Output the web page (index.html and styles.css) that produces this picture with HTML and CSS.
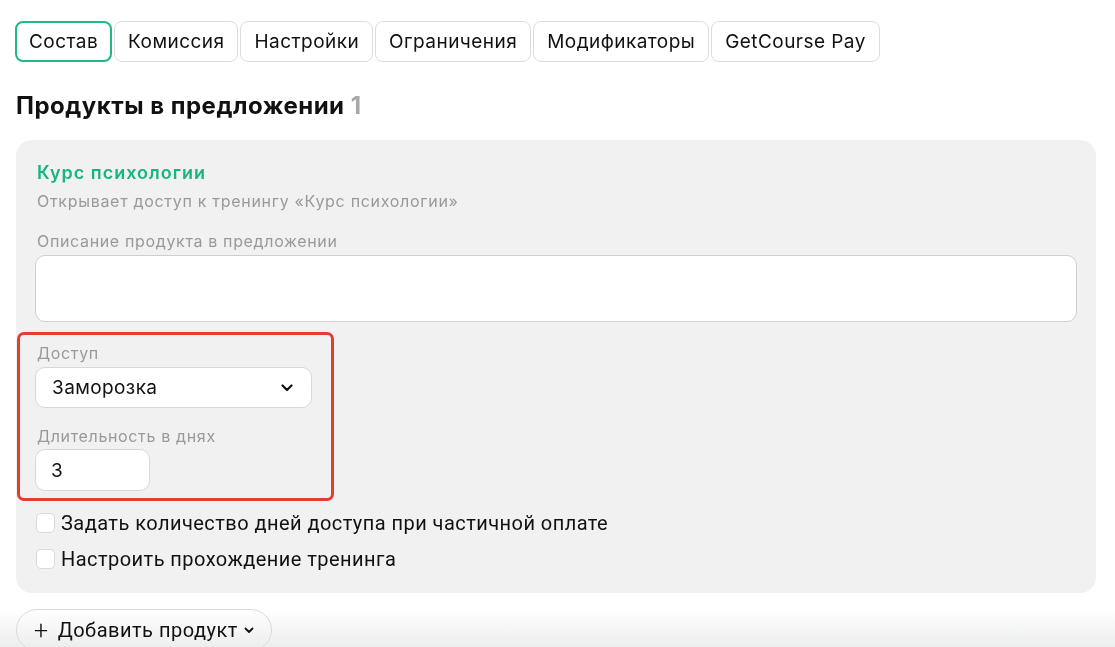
FILE: index.html
```html
<!DOCTYPE html>
<html lang="ru">
<head>
  <meta charset="UTF-8" />
  <meta name="viewport" content="width=device-width, initial-scale=1.0" />
  <title>Предложение — состав</title>
  <link rel="stylesheet" href="styles.css">
</head>
<body>
  
  <div class="bottom-fade"></div>

  <div class="page">
    <!-- Offer editor tabs -->
    <div class="tabs">
      <button class="tab active">Состав</button>
      <button class="tab">Комиссия</button>
      <button class="tab">Настройки</button>
      <button class="tab">Ограничения</button>
      <button class="tab">Модификаторы</button>
      <button class="tab">GetCourse Pay</button>
    </div>

    <h2 class="section-title">Продукты в предложении <span class="count">1</span></h2>

    <div class="product-card">
      <div class="product-name">Курс психологии</div>
      <div class="product-hint">Открывает доступ к тренингу «Курс психологии»</div>

      <label class="field-label first">Описание продукта в предложении</label>
      <textarea class="description"></textarea>

      <div class="access-group">
        <label class="field-label">Доступ</label>
        <div class="select">
          <span>Заморозка</span>
          <svg class="chevron" width="12" height="8" viewBox="0 0 12 8">
            <path d="M1.5 1.5 L6 6 L10.5 1.5" fill="none" stroke="#111" stroke-width="2.2" stroke-linecap="round" stroke-linejoin="round"/>
          </svg>
        </div>

        <label class="field-label days-label">Длительность в днях</label>
        <input class="days-input" type="text" value="3">
      </div>

      <label class="check-row first">
        <span class="checkbox"></span>
        Задать количество дней доступа при частичной оплате
      </label>
      <label class="check-row">
        <span class="checkbox"></span>
        Настроить прохождение тренинга
      </label>
    </div>

    <button class="add-product">
      <span class="plus">+</span> Добавить продукт
      <svg width="10" height="7" viewBox="0 0 10 7">
        <path d="M1.5 1.5 L5 5 L8.5 1.5" fill="none" stroke="#111" stroke-width="1.8" stroke-linecap="round" stroke-linejoin="round"/>
      </svg>
    </button>
  </div>
</body>
</html>
```

FILE: styles.css
```css
body {
  margin: 0;
  font-family: 'Inter', 'Noto Sans', sans-serif;
  color: #111;
  background: #fff;
  overflow: hidden;
}
.page {
  padding: 21px 19px 0 16px;
}
.tabs {
  display: flex;
  gap: 2px;
  margin-left: -1px;
}
.tab {
  height: 41px;
  padding: 0 13px;
  border: 1px solid #dcdcdc;
  border-radius: 8px;
  background: #fff;
  font-family: inherit;
  font-size: 19px;
  letter-spacing: 0.45px;
  color: #111;
  cursor: pointer;
}
.tab.active {
  border: 2px solid #1fb887;
  padding: 0 12px;
}
.section-title {
  margin: 30px 0 20px;
  font-size: 24px;
  line-height: 28px;
  letter-spacing: 0.5px;
  font-weight: 700;
}
.section-title .count {
  color: #a8a8a8;
}
.product-card {
  display: flex;
  flex-direction: column;
  align-items: flex-start;
  background: #f1f1f1;
  border-radius: 16px;
  padding: 22px 19px 22px 19px;
}
.product-name {
  margin-left: 2px;
  font-size: 18px;
  line-height: 22px;
  letter-spacing: 1px;
  font-weight: 600;
  color: #17b681;
}
.product-hint {
  margin: 7px 0 0 2px;
  font-size: 16px;
  line-height: 20px;
  letter-spacing: 0.7px;
  color: #999;
}
.field-label {
  display: block;
  margin-left: 2px;
  font-size: 16px;
  line-height: 20px;
  letter-spacing: 0.65px;
  color: #999;
}
.field-label.first {
  margin-top: 20px;
}
.description {
  box-sizing: border-box;
  width: 100%;
  height: 67px;
  margin-top: 4px;
  border: 1px solid #cfcfcf;
  border-radius: 10px;
  background: #fff;
  resize: none;
}
.access-group {
  position: relative;
  width: 277px;
  margin-top: 21px;
}
/* red frame drawn around the access settings */
.access-group::after {
  content: "";
  position: absolute;
  left: -18px;
  right: -22px;
  top: -11px;
  bottom: -10px;
  border: 3px solid #e43d30;
  border-radius: 7px;
  pointer-events: none;
}
.select {
  box-sizing: border-box;
  display: flex;
  align-items: center;
  justify-content: space-between;
  height: 41px;
  margin-top: 4px;
  padding: 0 18px 0 16px;
  border: 1px solid #d8d8d8;
  border-radius: 10px;
  background: #fff;
  font-size: 19px;
  letter-spacing: 0.4px;
}
.days-label {
  margin-top: 18px;
}
.days-input {
  box-sizing: border-box;
  display: block;
  width: 115px;
  height: 42px;
  margin-top: 3px;
  padding: 0 15px;
  border: 1px solid #d8d8d8;
  border-radius: 10px;
  background: #fff;
  font-family: inherit;
  font-size: 19px;
  color: #111;
}
.check-row {
  display: flex;
  align-items: center;
  gap: 6px;
  height: 24px;
  margin-top: 12px;
  font-family: 'Roboto', sans-serif;
  font-size: 20px;
  letter-spacing: 0.45px;
  color: #111;
}
.check-row.first {
  margin-top: 20px;
}
.checkbox {
  box-sizing: border-box;
  width: 19px;
  height: 20px;
  margin-left: 1px;
  border: 1px solid #dadada;
  border-radius: 5px;
  background: #fff;
}
.add-product {
  display: flex;
  align-items: center;
  gap: 6px;
  height: 42px;
  margin-top: 16px;
  padding: 0 17px 0 17px;
  border: 1px solid #d9d9d9;
  border-radius: 21px;
  background: transparent;
  font-family: 'Roboto', sans-serif;
  font-size: 20px;
  letter-spacing: 0.5px;
  color: #111;
}
.add-product .plus {
  font-size: 25px;
  font-weight: 300;
  margin-right: 3px;
}
.bottom-fade {
  position: fixed;
  left: 0;
  right: 0;
  bottom: 0;
  z-index: -1;
  height: 38px;
  background: linear-gradient(rgba(238, 240, 239, 0), #eceeed);
}
```
